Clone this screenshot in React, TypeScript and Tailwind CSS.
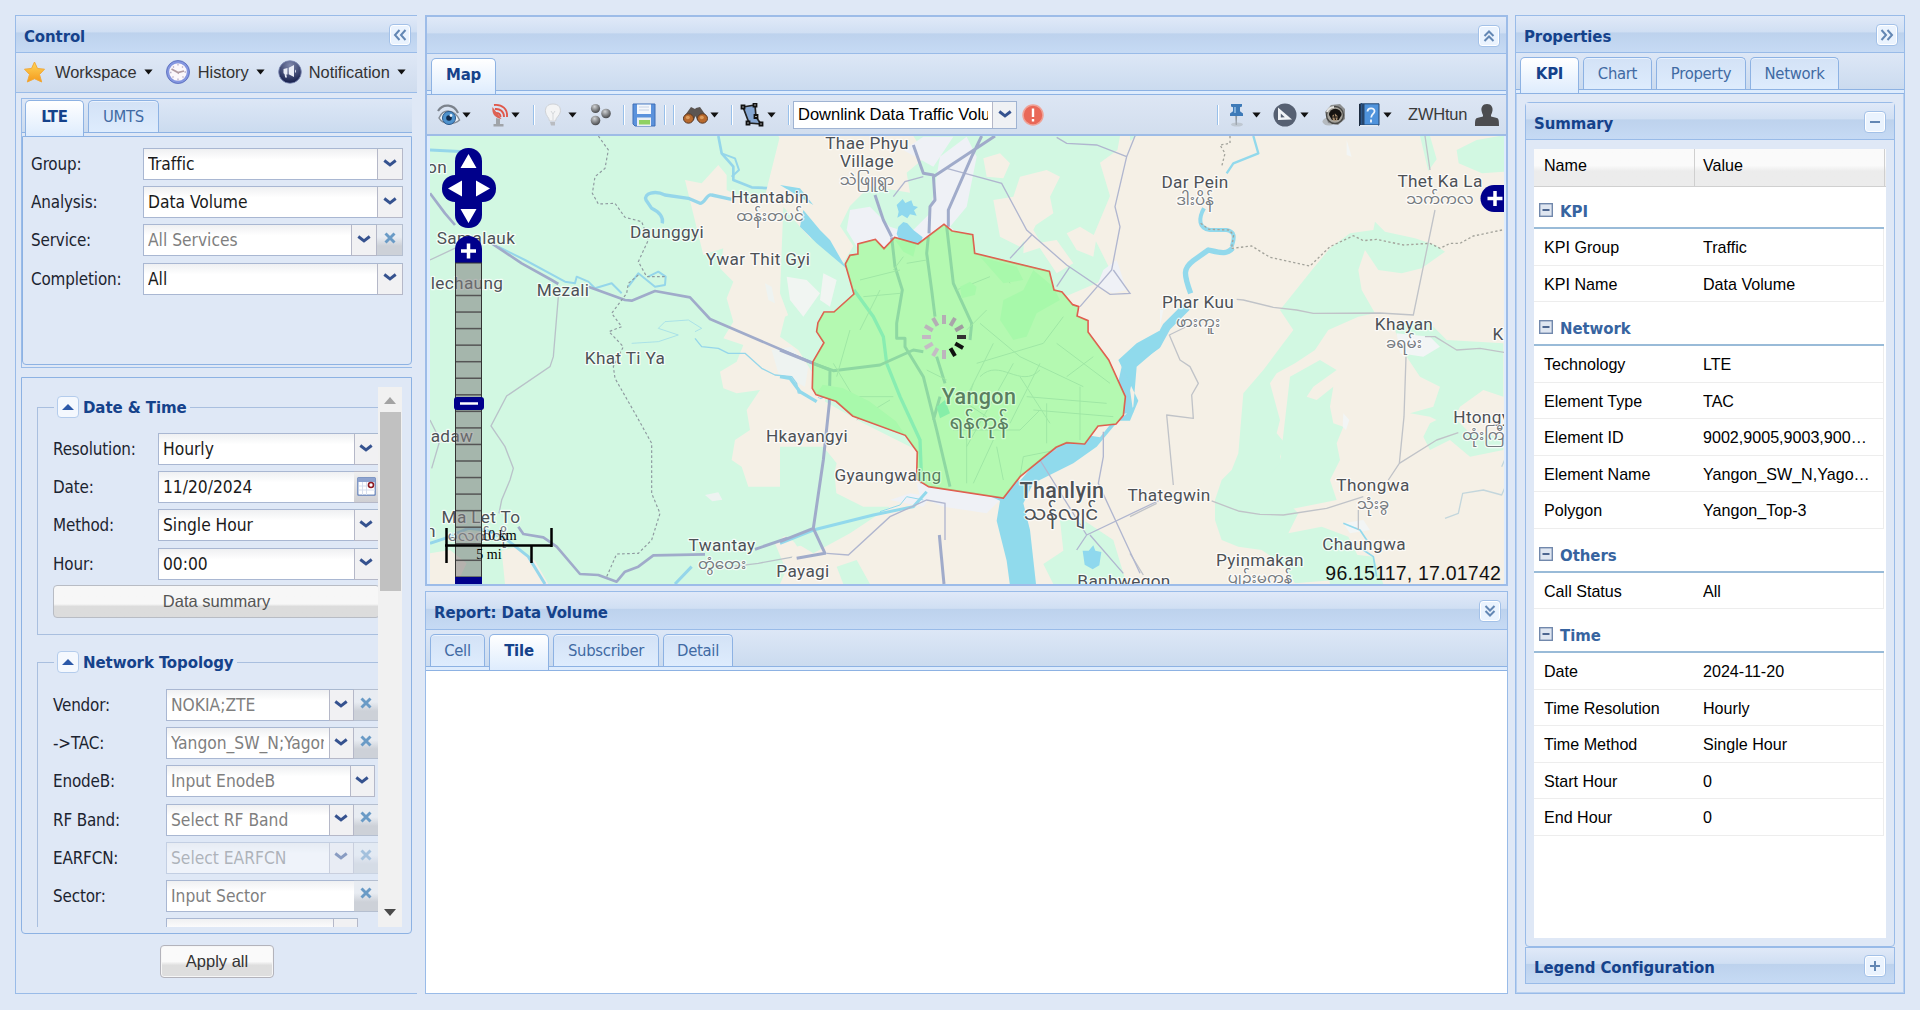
import React from "react";

const TAHOMA = "font-['DejaVu_Sans_Condensed','DejaVu_Sans',sans-serif]";
const ARIAL = "font-['Liberation_Sans',Arial,sans-serif]";

/* ---------- small shared parts ---------- */

const Caret = ({ className = "" }: { className?: string }) => (
  <svg viewBox="0 0 9 6" className={"h-[6px] w-[9px] shrink-0 " + className}>
    <path d="M.4.500h8.200L4.500 5.500z" fill="#111" />
  </svg>
);

const Chevron = () => (
  <svg viewBox="0 0 14 9" className="h-[9px] w-[14px]">
    <path d="M1.300 1.500L7 6l5.700-4.500" fill="none" stroke="#35528f" strokeWidth="2.900" />
  </svg>
);

const ToolButton = ({ children }: { children: React.ReactNode }) => (
  <span className="mt-px flex h-[22px] w-[22px] shrink-0 items-center justify-center rounded-[4px] border border-[#a3c1e8] bg-[#eaf3fe] shadow-[inset_0_0_0_1px_#fff]">
    <svg viewBox="0 0 16 16" className="h-4 w-4" fill="none" stroke="#6387b4" strokeWidth="2">
      {children}
    </svg>
  </span>
);

const Trigger = ({ w = "w-[25px]" }: { w?: string }) => (
  <span className={"flex h-[32px] shrink-0 items-center justify-center border border-[#b5b8c8] border-t-[#a9b9d0] bg-[#f1f1f3] pr-px pb-[2px] " + w}>
    <Chevron />
  </span>
);

const Clear = ({ w = "w-[25px]" }: { w?: string }) => (
  <span className={"flex h-[32px] shrink-0 items-center justify-center border-y border-r border-[#b5bfd0] bg-gradient-to-b from-[#e8ecf2] from-40% to-[#cdd1d8] to-70% pb-[5px] " + w}>
    <svg viewBox="0 0 12 12" className="h-[12px] w-[12px]">
      <path d="M1.500 1.500l9 9M10.500 1.500l-9 9" stroke="#6a9bc6" strokeWidth="2.900" />
    </svg>
  </span>
);

const CalendarTrigger = () => (
  <span className="flex h-[32px] w-[24px] shrink-0 items-center justify-center border-y border-[#b5b8c8] bg-gradient-to-b from-[#efefef] to-[#cfcfd3] pb-[2px]">
    <svg viewBox="0 0 19 19" className="h-[19px] w-[19px]">
      <rect x=".7" y=".7" width="17.600" height="17.600" rx="1.500" fill="#fff" stroke="#7f97c4" strokeWidth="1.600" />
      <rect x="1" y="1" width="17" height="4" fill="#8ea3cf" />
      <path d="M5.500 5v13M9.500 5v13M2 9h16M2 13h16" stroke="#d7dfee" />
      <circle cx="14" cy="8" r="2.500" fill="#fff" stroke="#8e1a22" strokeWidth="1.600" />
    </svg>
  </span>
);

type FieldProps = {
  label: string;
  value: string;
  labelW: string;
  inputW: string;
  muted?: boolean;
  faded?: boolean;
  children?: React.ReactNode;
};

const Field = ({ label, value, labelW, inputW, muted, faded, children }: FieldProps) => (
  <div className="flex h-[38.200px] shrink-0">
    <span className={"shrink-0 pt-[4px] text-[16.900px] tracking-[-0.150px] whitespace-nowrap text-[#1c2430] " + labelW}>{label}</span>
    <div className={"flex " + (faded ? "opacity-50" : "")}>
      <span
        className={
          "block h-[32px] shrink-0 overflow-hidden border border-r-0 border-[#a9b7d2] bg-gradient-to-b from-[#eff0f2] to-white to-35% pr-[5px] pl-[4px] pt-[3px] text-[17.300px] tracking-[-0.020px] whitespace-nowrap " +
          inputW + (muted ? " text-[#7f7f7f]" : " text-[#1a1a1a]")
        }
      >
        <span className="block overflow-hidden">{value}</span>
      </span>
      {children}
    </div>
  </div>
);

const Header = ({ title, children, h = "h-[38px]" }: { title?: string; children?: React.ReactNode; h?: string }) => (
  <div className={"flex shrink-0 items-center justify-between border-b border-[#99bbe8] bg-[linear-gradient(to_bottom,#e0e9f8,#d0dff3_44%,#bdd2ed_47%,#c6daf4)] pr-[6px] pl-[8px] " + h}>
    <span className="pt-[6px] text-[16.600px] leading-none font-bold tracking-[-0.080px] text-[#15428b]">{title}</span>
    {children}
  </div>
);

const Tab = ({ label, active, w }: { label: string; active?: boolean; w: string }) => (
  <span
    className={
      "flex shrink-0 items-center justify-center rounded-t-[5px] border border-b-0 border-[#8db2e3] whitespace-nowrap " +
      w +
      (active
        ? " relative z-10 h-[36px] bg-gradient-to-b from-white to-[#deecfd] pb-[2px] text-[16.600px] font-bold tracking-[-0.200px] text-[#15428b]"
        : " h-[32px] bg-gradient-to-b from-[#d3e2f6] to-[#deecfd] pt-[2px] text-[16.500px] tracking-[-0.300px] text-[#416aa3] shadow-[inset_0_1px_0_#eaf2fd]")
    }
  >
    {label}
  </span>
);

const TabBar = ({ children, className = "" }: { children: React.ReactNode; className?: string }) => (
  <div className={"shrink-0 " + className}>
    <div className="flex h-[36px] gap-[4px] bg-gradient-to-b from-[#dde7f6] to-[#cbdbef] pt-[4px] pl-[4px]">{children}</div>
    <div className="h-[5px] border-y border-[#8db2e3] bg-[#deecfd]" />
  </div>
);

/* ---------- left panel ---------- */

const StarIcon = () => (
  <svg viewBox="0 0 24 24" className="h-[24px] w-[24px]">
    <defs>
      <linearGradient id="star" x1="0" y1="0" x2="0" y2="1">
        <stop offset="0" stopColor="#ffd65a" />
        <stop offset="1" stopColor="#f59a1c" />
      </linearGradient>
    </defs>
    <path d="M11.500 2l3 6.500 7 .7-5 5.300 2.200 7.500-7.200-3.300L4.300 22l2.200-7.500L1.500 9.200l7-.7z" fill="url(#star)" stroke="#f1a93a" strokeLinejoin="round" />
  </svg>
);

const ClockIcon = () => (
  <svg viewBox="0 0 24 24" className="h-[24px] w-[24px]">
    <circle cx="12" cy="12" r="10.200" fill="#fbf7fb" stroke="#8496e0" strokeWidth="2.800" />
    <circle cx="12" cy="12" r="11.500" fill="none" stroke="#5468b8" strokeWidth=".8" />
    <path d="M5.500 9l6.500 3.500 6-1.500M12 12.500l1 1" stroke="#b09ba2" strokeWidth="1.800" fill="none" />
    <path d="M12 3.500v2M12 18.500v2M4 12.500h1.500M18.500 12h1.500M6.500 17.500l1-1M17.500 17.500l-1-1M7 6.500l1 1M17 6.500l-1 1" stroke="#b9b0c8" strokeWidth="1.300" />
  </svg>
);

const MegaphoneIcon = () => (
  <svg viewBox="0 0 24 24" className="h-[24px] w-[24px]">
    <defs>
      <radialGradient id="mega" cx=".5" cy=".2" r=".75">
        <stop offset="0" stopColor="#8089ad" />
        <stop offset="1" stopColor="#1a2350" />
      </radialGradient>
    </defs>
    <circle cx="12" cy="12" r="11.300" fill="url(#mega)" stroke="#7a86b2" strokeWidth=".8" />
    <path d="M5.500 9l4-1v6.500H8.300l.7 3H7.200L6.500 14l-1-.7zM10.700 7.700L16 5v12l-5.300-2.700zM17 9.500c1.300.8 1.300 2.700 0 3.500z" fill="#e9ecf6" />
  </svg>
);

const FieldsetLegend = ({ children }: { children: React.ReactNode }) => (
  <div className="flex h-[22px] items-center">
    <span className="h-px w-[17px] bg-[#a9bfdf]" />
    <span className="ml-[3px] flex h-[22px] w-[22px] items-center justify-center rounded-[4px] border border-[#b4ccec] bg-[#f4f8fe]">
      <svg viewBox="0 0 12 6" className="h-[6px] w-[12px]"><path d="M6 0l6 6H0z" fill="#2b58a8" /></svg>
    </span>
    <span className="mr-[3px] ml-[4px] pt-px text-[16.700px] font-bold tracking-[-0.100px] whitespace-nowrap text-[#15428b]">{children}</span>
    <span className="h-px flex-1 bg-[#a9bfdf]" />
  </div>
);

const MenuItem = ({ icon, label, className = "", gap = "ml-[9px]" }: { icon: React.ReactNode; label: string; className?: string; gap?: string }) => (
  <span className={"flex items-center text-[16.400px] text-[#333] " + className}>
    {icon}
    <span className={gap}>{label}</span>
    <Caret className="ml-[7px]" />
  </span>
);

const LeftPanel = () => (
  <div className="flex w-[402px] shrink-0 flex-col border border-r-0 border-[#99bbe8]">
    <Header title="Control" h="h-[37px]">
      <ToolButton><path d="M7.500 3L3 8l4.500 5M13.500 3L9 8l4.500 5" /></ToolButton>
    </Header>
    <div className={"flex h-[40px] shrink-0 items-center border-b border-[#99bbe8] bg-gradient-to-b from-[#dfe8f6] to-[#cfdcee] pl-[7px] " + ARIAL}>
      <MenuItem icon={<StarIcon />} label="Workspace" gap="ml-[8px]" />
      <MenuItem icon={<ClockIcon />} label="History" className="ml-[13px]" gap="ml-[8px]" />
      <MenuItem icon={<MegaphoneIcon />} label="Notification" className="ml-[13px]" gap="ml-[7px]" />
    </div>

    <div className="mt-[5px] ml-[5px] flex h-[270px] w-[391px] shrink-0 flex-col border border-r-0 border-[#99bbe8]">
      <div className="h-[37px] shrink-0">
        <div className="flex h-[34px] gap-[4px] border-b border-[#8db2e3] bg-gradient-to-b from-[#dde7f6] to-[#cbdbef] pt-[1px] pl-[3px]">
          <Tab label="LTE" active w="w-[59px]" />
          <Tab label="UMTS" w="w-[71px]" />
        </div>
      </div>
      <div className="flex h-[229px] flex-col rounded-b-[4px] border border-[#8db2e3] pt-[11px] pl-[8px]">
        <Field label="Group:" value="Traffic" labelW="w-[112px]" inputW="w-[234px]"><Trigger w="w-[26px]" /></Field>
        <Field label="Analysis:" value="Data Volume" labelW="w-[112px]" inputW="w-[234px]"><Trigger w="w-[26px]" /></Field>
        <Field label="Service:" value="All Services" labelW="w-[112px]" inputW="w-[208px]" muted><Trigger w="w-[26px]" /><Clear w="w-[26px]" /></Field>
        <Field label="Completion:" value="All" labelW="w-[112px]" inputW="w-[234px]"><Trigger w="w-[26px]" /></Field>
      </div>
    </div>

    <div className="mt-[9px] ml-[5px] flex h-[557px] w-[391px] shrink-0 rounded-b-[4px] border border-[#8db2e3]">
      <div className="mt-[9px] h-[540px] w-[356px] shrink-0 overflow-hidden pl-[15px]">
        <div className="mt-[9px]">
          <FieldsetLegend>Date &amp; Time</FieldsetLegend>
          <div className="-mt-[11px] h-[228px] border-b border-l border-[#a9bfdf] pt-[26px] pl-[15px]">
            <Field label="Resolution:" value="Hourly" labelW="w-[105px]" inputW="w-[196px]"><Trigger /></Field>
            <Field label="Date:" value="11/20/2024" labelW="w-[105px]" inputW="w-[196px]"><CalendarTrigger /></Field>
            <Field label="Method:" value="Single Hour" labelW="w-[105px]" inputW="w-[196px]"><Trigger /></Field>
            <Field label="Hour:" value="00:00" labelW="w-[105px]" inputW="w-[196px]"><Trigger /></Field>
            <div className={"-mt-px flex h-[33px] w-[327px] items-center justify-center rounded-[4px] border border-[#b8bcc4] bg-gradient-to-b from-[#f7f7f7] from-58% to-[#dcdcdc] to-66% text-[16.500px] text-[#555] " + ARIAL}>
              Data summary
            </div>
          </div>
        </div>
        <div className="mt-[16px]">
          <FieldsetLegend>Network Topology</FieldsetLegend>
          <div className="-mt-[11px] border-l border-[#a9bfdf] pt-[27px] pl-[15px]">
            <Field label="Vendor:" value="NOKIA;ZTE" labelW="w-[113px]" inputW="w-[163px]" muted><Trigger /><Clear /></Field>
            <Field label="->TAC:" value="Yangon_SW_N;Yagon" labelW="w-[113px]" inputW="w-[163px]" muted><Trigger /><Clear /></Field>
            <Field label="EnodeB:" value="Input EnodeB" labelW="w-[113px]" inputW="w-[184px]" muted><Trigger /></Field>
            <Field label="RF Band:" value="Select RF Band" labelW="w-[113px]" inputW="w-[163px]" muted><Trigger /><Clear /></Field>
            <Field label="EARFCN:" value="Select EARFCN" labelW="w-[113px]" inputW="w-[163px]" muted faded><Trigger /><Clear /></Field>
            <Field label="Sector:" value="Input Sector" labelW="w-[113px]" inputW="w-[188px]" muted><Clear /></Field>
            <Field label="" value="" labelW="w-[113px]" inputW="w-[167px]"><Trigger /></Field>
          </div>
        </div>
      </div>
      <div className="mt-[9px] flex h-[540px] w-[24px] flex-col items-center bg-[#f1f1f1]">
        <svg viewBox="0 0 12 7" className="mt-[10px] h-[7px] w-[12px] shrink-0"><path d="M6 0l6 7H0z" fill="#a3a3a3" /></svg>
        <div className="mt-[8px] h-[179px] w-[21px] shrink-0 bg-[#c1c1c1]" />
        <svg viewBox="0 0 12 7" className="mt-auto mb-[11px] h-[7px] w-[12px] shrink-0"><path d="M6 7l6-7H0z" fill="#4a4a4a" /></svg>
      </div>
    </div>

    <div className={"mt-[11px] ml-[144px] flex h-[33px] w-[114px] shrink-0 items-center justify-center rounded-[4px] border border-[#b3b3bb] bg-gradient-to-b from-[#fafafa] from-50% to-[#dedede] to-62% text-[16.500px] text-[#333] shadow-[inset_0_0_0_1px_#f6f6f6] " + ARIAL}>
      Apply all
    </div>
  </div>
);

/* ---------- map toolbar ---------- */

const Sep = ({ className = "" }: { className?: string }) => (
  <span className={"h-[20px] w-[2px] shrink-0 border-l border-[#98c0ea] bg-white " + className} />
);

const MapToolbar = () => (
  <div className={"flex h-[41px] shrink-0 items-center border-b-2 border-[#9ebce6] bg-gradient-to-b from-[#dde6f4] to-[#d2deee] pl-[10px] text-[#222] " + ARIAL}>
    <svg viewBox="0 0 24 24" className="h-[24px] w-[24px] shrink-0">
      <path d="M1 8C6 0 17 1 21 10" fill="none" stroke="#7b828c" strokeWidth="2.200" />
      <path d="M2 15C6 6 17 5 22.500 17 17 22 6 22 2 15z" fill="#eef2f6" stroke="#858d97" strokeWidth="1.500" />
      <circle cx="12" cy="15" r="6.500" fill="#4f93cd" stroke="#27578c" />
      <circle cx="12" cy="15" r="2.800" fill="#10294a" />
      <circle cx="14" cy="12.500" r="1.400" fill="#e6f1fb" />
    </svg>
    <Caret className="ml-[1px]" />
    <svg viewBox="0 0 18 24" className="ml-[20px] h-[24px] w-[18px] shrink-0">
      <path d="M3 2C11 1 17 6 16 14M4 6c5-.5 9 2.500 9 8M5 10c2.500 0 4.500 1.500 4.500 4" fill="none" stroke="#e0574a" strokeWidth="1.900" />
      <path d="M1.500 4c-1 6 2 11 9 12z" fill="#dd6255" />
      <path d="M5 15l4 1v5h3.500v2.500H2.500V21H5z" fill="#a0a4a9" />
    </svg>
    <Caret className="ml-[2px]" />
    <Sep className="ml-[13px]" />
    <svg viewBox="0 0 18 24" className="ml-[9px] h-[24px] w-[18px] shrink-0">
      <path d="M9 1C3 1 1 5 1.500 9 2 13 5 14 5.500 18h6c.5-4 4-5 4.800-9C17 5 15 1 9 1z" fill="#f3f4f5" stroke="#cfd2d6" />
      <path d="M6 19h5v3.500H7z" fill="#b9bcc1" />
      <path d="M7 8l2 3 2-3M9 11v6" fill="none" stroke="#d5d8db" />
    </svg>
    <Caret className="ml-[6px]" />
    <svg viewBox="0 0 22 24" className="ml-[13px] h-[24px] w-[22px] shrink-0">
      <defs>
        <radialGradient id="ball" cx=".4" cy=".3" r=".7">
          <stop offset="0" stopColor="#d0d2d4" />
          <stop offset="1" stopColor="#46484b" />
        </radialGradient>
      </defs>
      <circle cx="5.500" cy="5.500" r="4.600" fill="url(#ball)" />
      <circle cx="16" cy="10.500" r="4.800" fill="url(#ball)" />
      <circle cx="5.500" cy="17.500" r="4.800" fill="url(#ball)" />
    </svg>
    <Sep className="ml-[11px]" />
    <svg viewBox="0 0 24 24" className="ml-[7px] h-[24px] w-[24px] shrink-0">
      <path d="M1 1h22v22H3l-2-2z" fill="#5b92dc" stroke="#3e6fb6" />
      <rect x="5" y="1.500" width="14" height="9.500" fill="#f4f7fc" />
      <path d="M7 4h10M7 7h10" stroke="#c5d2e6" />
      <rect x="5" y="14.500" width="14" height="8.500" fill="#e9eef2" />
      <rect x="7" y="17" width="11" height="4.500" fill="#8fd161" />
    </svg>
    <Sep className="ml-[8px]" />
    <Sep className="ml-[7px]" />
    <svg viewBox="0 0 25 18" className="ml-[8px] h-[18px] w-[25px] shrink-0">
      <path d="M8 1l4 2 1-1 4-1 7 10-4 6-6-3-1.500-4-1.500 4-6 3-5-5z" fill="#5b5552" />
      <ellipse cx="5.500" cy="12.500" rx="5" ry="4.700" fill="#b86a2e" stroke="#5a3a26" />
      <ellipse cx="19.500" cy="12.500" rx="5" ry="4.700" fill="#b86a2e" stroke="#5a3a26" />
      <ellipse cx="4.800" cy="11.500" rx="2" ry="1.800" fill="#dd9d5e" />
      <ellipse cx="18.800" cy="11.500" rx="2" ry="1.800" fill="#dd9d5e" />
    </svg>
    <Caret className="ml-[2px]" />
    <Sep className="ml-[12px]" />
    <svg viewBox="0 0 24 24" className="ml-[7px] h-[24px] w-[24px] shrink-0">
      <path d="M3 4l12-2 1 12 5 7-12-1z" fill="#86a7d3" stroke="#222" strokeWidth="1.700" />
      <path d="M1.500 2.500h3v3h-3zM13.500.5h3v3h-3zM14.500 12h3v3h-3zM19.500 19.500h3v3h-3zM6.500 18.500h3v3h-3z" fill="#fff" stroke="#111" strokeWidth="1.800" />
    </svg>
    <Caret className="ml-[3px]" />
    <Sep className="ml-[12px]" />
    <div className="ml-[3px] flex h-[28px] w-[224px] shrink-0 border border-[#9fb3d2] bg-white text-[16.500px] text-black">
      <span className="my-auto ml-[4px] w-[190px] overflow-hidden whitespace-nowrap">Downlink Data Traffic Volume</span>
      <span className="ml-auto flex w-[24px] items-center justify-center border-l border-[#b5b8c8] bg-[#eff1f4]"><Chevron /></span>
    </div>
    <svg viewBox="0 0 22 22" className="ml-[5px] h-[22px] w-[22px] shrink-0">
      <circle cx="11" cy="11" r="10" fill="#e96858" stroke="#f0a297" strokeWidth="1.500" />
      <path d="M11 4.500v8.500M11 15v2.600" stroke="#fff" strokeWidth="2.400" />
    </svg>
    <Sep className="ml-[173px]" />
    <svg viewBox="0 0 16 24" className="ml-[9px] h-[24px] w-[16px] shrink-0">
      <ellipse cx="9" cy="21.500" rx="6" ry="2" fill="#bfc8d2" />
      <path d="M7.300 13h1.800l-.5 9h-.8z" fill="#8d959d" />
      <path d="M3 1h11v2.500l-2 .8v4l3 2.200V13H2v-2.500l3-2.200v-4l-2-.8z" fill="#3d7ab8" />
      <path d="M6 4h2v6H6z" fill="#7fb0dd" />
    </svg>
    <Caret className="ml-[8px]" />
    <svg viewBox="0 0 24 24" className="ml-[12px] h-[24px] w-[24px] shrink-0">
      <ellipse cx="12" cy="12" rx="11.500" ry="11.500" fill="#566072" />
      <path d="M5 4.500L19 16.500 5 17z" fill="#f0f3f6" />
      <path d="M7.800 10.500l4 3.700-4 .2z" fill="#566072" />
    </svg>
    <Caret className="ml-[3px]" />
    <svg viewBox="0 0 24 24" className="ml-[13px] h-[24px] w-[24px] shrink-0">
      <ellipse cx="7" cy="18.500" rx="6.500" ry="4" fill="#b5babf" />
      <path d="M3 9l6-7 9-1 5 5v10l-7 6-10-2z" fill="#8d8f90" />
      <circle cx="13" cy="12" r="8.500" fill="#a5a29a" stroke="#4a4a48" strokeWidth="1.400" />
      <path d="M7 12a6.300 6.300 0 0 1 12.600 0l-3 5h-6.600z" fill="#161412" />
      <path d="M10 13l3-2.500 3 3-1 4h-4z" fill="#a68a6a" />
      <path d="M12 10l1.500 7M9 14h8" stroke="#161412" />
      <path d="M5 9a8 8 0 0 1 7-5" stroke="#e5e5e2" strokeWidth="2" fill="none" />
    </svg>
    <svg viewBox="0 0 22 24" className="ml-[12px] h-[24px] w-[22px] shrink-0">
      <path d="M1 1l3-1v23H1z" fill="#1c2b40" />
      <path d="M3 .8h18V22H3z" fill="#4f93dc" stroke="#224672" />
      <path d="M2 22h18v1.500H2z" fill="#e5eaf0" />
      <path d="M3.500 1h3v21h-3z" fill="#27466d" />
      <path d="M9.500 8.500c.2-4.500 7.500-4 7 0-.3 2.500-3.300 2.500-3.300 6M13 16.500v3" fill="none" stroke="#eef5fd" strokeWidth="1.800" />
    </svg>
    <Caret className="ml-[3px]" />
    <span className="ml-[16px] text-[16.500px] tracking-[-0.200px] text-[#3a3a3a]">ZWHtun</span>
    <svg viewBox="0 0 24 22" className="ml-[8px] h-[22px] w-[24px] shrink-0">
      <path d="M12 0c4.500 0 6 3.500 5.500 6.500-.4 2.500-1 3.500-1.500 4.500v1.500l6 1.500c1.500.7 2 2 2 8H0c0-6 .5-7.300 2-8l6-1.500V11c-.5-1-1.100-2-1.500-4.500C6 3.500 7.500 0 12 0z" fill="#4c4d50" />
    </svg>
  </div>
);

/* ---------- map ---------- */

type Label = [x: number, y: number, text: string, kind?: "my" | "big" | "bigmy"];

const LABELS: Label[] = [
  [437, 173, "on"],
  [476, 244, "Samalauk"],
  [467, 289, "lechaung"],
  [563, 296, "Mezali"],
  [667, 238, "Daunggyi"],
  [770, 203, "Htantabin"],
  [770, 221, "ထန်းတပင်", "my"],
  [758, 265, "Ywar Thit Gyi"],
  [625, 364, "Khat Ti Ya"],
  [452, 442, "adaw"],
  [481, 523, "Ma Let To"],
  [478, 541, "မလက်တို", "my"],
  [431, 537, "n"],
  [722, 551, "Twantay"],
  [722, 569, "တွံတေး", "my"],
  [803, 577, "Payagi"],
  [807, 442, "Hkayangyi"],
  [888, 481, "Gyaungwaing"],
  [867, 149, "Thae Phyu"],
  [867, 167, "Village"],
  [867, 185, "သဲဖြူရွာ", "my"],
  [979, 404, "Yangon", "big"],
  [979, 429, "ရန်ကုန်", "bigmy"],
  [1062, 498, "Thanlyin", "big"],
  [1061, 520, "သန်လျင်", "bigmy"],
  [1169, 501, "Thategwin"],
  [1124, 587, "Banbwegon"],
  [1195, 188, "Dar Pein"],
  [1195, 205, "ဒါးပိန်", "my"],
  [1198, 308, "Phar Kuu"],
  [1198, 327, "ဖားကူး", "my"],
  [1440, 187, "Thet Ka La"],
  [1440, 204, "သက်ကလ", "my"],
  [1404, 330, "Khayan"],
  [1404, 348, "ခရမ်း", "my"],
  [1503, 340, "Ka"],
  [1484, 423, "Htongyi"],
  [1486, 440, "ထုံးကြီး", "my"],
  [1373, 491, "Thongwa"],
  [1373, 509, "သုံးခွ", "my"],
  [1364, 550, "Chaungwa"],
  [1260, 566, "Pyinmakan"],
  [1260, 583, "ပျဉ်းမကန်", "my"],
];

const MapLabels = () => (
  <g textAnchor="middle" stroke="#fff" strokeOpacity=".75" strokeLinejoin="round" paintOrder="stroke">
    {LABELS.map(([x, y, text, kind]) => {
      const my = kind === "my" || kind === "bigmy";
      const big = kind === "big" || kind === "bigmy";
      return (
        <text
          key={text}
          x={x}
          y={y}
          fill={kind === "my" ? "#74797e" : "#4d5156"}
          fontSize={my ? (big ? 20 : 15) : big ? 21.5 : 17.2}
          fontWeight={big && !my ? 500 : 400}
          fontFamily={my ? "'Noto Sans Myanmar','Padauk',sans-serif" : "Roboto, sans-serif"}
          letterSpacing={my ? 0 : 0.35}
          strokeWidth={2.5}
        >
          {text}
        </text>
      );
    })}
  </g>
);

const POLY =
  "M99 695L132 638 110 605 114 578 132 546 162 546 222 492 196 402 210 376 234 372 234 342 286 328 312 356 344 322 414 342 492 283 516 303 578 314 584 370 808 424 822 480 846 486 878 524 896 530 891 558 924 572 924 606 986 690 1036 800 1030 856 1008 882 954 888 914 942 860 938 828 952 720 1040 670 1104 446 1070 410 1048 412 966 376 916 218 858 168 814 108 794 97 775z";

const MapView = () => (
  <svg viewBox="430 136 1074 448" className="block h-[448px] w-[1074px]">
    <rect x="430" y="136" width="1075" height="448" fill="#d2f8e2" />

    {/* western district */}
    <g transform="translate(425 130) scale(.33333)">
      <g fill="#f5f0e6">
        <path d="M1060 18L1080 50 1110 70 1130 130 1170 190 1200 230V18z" />
        <path d="M780 150l50 10 50-55 25 30v45l60 30 60-20 60 40 60 60 30 80-20 60 15 60-30 40-60 30-15 60 55 40 50 80 30 50v280H970l-20-60-30-20 10-60 45-30-10-60 40-60-70 10-40-15-10-50 50-30 20-50-60-20 30-50-20-70 20-50-40-40 10-60-60 20z" />
        <path d="M15 1270l60-10 50 40-30 62H15zM230 1262l40-10 60 40 40 70H240z" />
        <path d="M1100 1170l50-20 50 30v60l-60-20zM1050 1240l40-30 40 60 70 20v72h-100z" />
      </g>
      <path d="M1040 660l60-10 50 60-10 60-80-40zM840 1095l40-8 12 22-30 5zM1110 420l40 20-20 80-30-30zM1020 460l20 10 10 50-20-10z" fill="#eef3f1" />
      <g fill="none" stroke="#95d6ea" strokeLinejoin="round">
        <path d="M880 18L890 70 925 110 925 150 980 172 1040 175 1080 180 1110 240" strokeWidth="8" />
        <path d="M1040 170L1080 178 1100 190" strokeWidth="22" />
        <path d="M890 70L930 85 942 120 920 140" strokeWidth="6" />
        <path d="M920 208L860 195C845 190 840 220 825 220L790 205 720 195C690 180 655 190 663 210L680 235C710 250 715 265 712 280" strokeWidth="10" />
        <path d="M15 60L120 65" strokeWidth="9" />
        <path d="M220 350L300 390 420 455 450 460 455 440 490 455 510 475 560 460 590 490" strokeWidth="6" />
        <path d="M610 470L640 430 690 470 720 465 722 440 700 425 670 440" strokeWidth="6" />
        <path d="M810 625L830 650 880 655 910 670 960 670 1010 715 1050 735 1100 740 1115 760 1120 790 1170 812 1200 800" strokeWidth="4" />
        <path d="M1120 795L1175 812 1185 805" strokeWidth="12" />
        <path d="M15 1240L60 1225 130 1195 180 1200 240 1225" strokeWidth="9" />
        <path d="M240 1225L310 1280 360 1362M750 1362L800 1310" strokeWidth="9" />
        <path d="M620 640l80-5 60-20-60-20 20-20 70-5 40 25-20 10" strokeWidth="2" />
      </g>
      <g fill="none" stroke="#a0abca" strokeWidth="8" strokeLinejoin="round">
        <path d="M15 190L60 250 90 285M200 340L290 400 380 450 400 462M490 470L600 510 620 512 690 483 795 502 855 567 1160 698" />
        <path d="M1195 950L1190 1080 1165 1195 1200 1270M990 1258L1165 1198" strokeWidth="9" />
        <path d="M280 1190L295 1212 355 1222 395 1250 465 1332 520 1335 575 1355 600 1325 640 1310 685 1276 840 1273M1110 1285L1200 1270" />
      </g>
      <g fill="none" stroke="#b9c2c9" strokeWidth="4">
        <path d="M400 500L385 680 375 710 245 798 198 888 240 950 265 1015 255 1050 230 1110 222 1150M15 390L100 350M15 870L45 930 20 1015M920 1310L1000 1300 1110 1280" />
      </g>
      <g fill="none" stroke="#8f9aa0" strokeWidth="3.500" strokeDasharray="8 7">
        <path d="M520 18L550 60 540 115 510 140 502 190 520 222 570 220 600 262 650 275 670 330 640 395 665 440 720 440M640 435L610 460 605 490 560 550 590 590 552 605 595 650 565 710 570 745 630 850 680 940 680 1090 705 1150 680 1230 640 1270 575 1272 545 1340" />
      </g>
    </g>

    {/* eastern district */}
    <g transform="translate(1130 130) scale(.33333)">
      <path d="M-30 18H1126V1362H-1050L-1000 1250-900 1220-700 1080-300 900-200 600-110 480 0 430 -40 300 -60 180z" fill="#f5f0e6" />
      <g fill="#d2f8e2">
        <path d="M0 18H40L50 60 40 120 20 190 0 220zM0 230l10 20-10 15zM0 500l15 10-5 25-10 3z" />
        <path d="M980 60l60-30 86-15v110l-70 5-70-30zM870 18h30l20 70-25 35z" />
        <path d="M550 415l50-60 60-45 70-10 5-25 30 30 90 20 60 20 30 20-70 50-60 15-70-10-40-60-20 60 10 60 40 70-50 10-90 40-40 60-60 40-55 30-20 30 30 110-10 40 25 30-15 40 15 60-20 50 60 60-30 60 100-20 80 30 30 60-70 70-120 10-40-60-60-40-70-10-50-20-20-60 0-60 20-60 30-30 20-50 15-180 60-70 60-80 30-40-40-60z" />
        <path d="M480 740l90-50 50 30-70 50-20 30 30 10 50-40-10 60 10 50 30 10-20 50 10 50-30 60 20 60-200 40-20-60 20-60 30-30 15-130z" />
        <path d="M790 590l100-20 60 60 170 10v160l-60-20-70 50-30 60-60-30-60-10 70-20 20-60-60-30-40-60z" />
        <path d="M900 880l60-30 60 60 100 10v40l-100 20-60-50-60 30-20-40zM590 1290l50-20 90 10 30 82H600z" />
      </g>
      <path d="M40 530l60 10-10 50-60-10zM800 610l100 10 30 30-50 30-70-10zM640 1180l60-10 20 30-60 10zM640 850l18 20-10 30-10-10zM650 30l15 50-15-5z" fill="#f2f5f5" />
      <g fill="none" stroke="#92d9ec" strokeLinejoin="round">
        <path d="M370 18L385 70 310 100 290 130" strokeWidth="7" />
        <path d="M222 235C205 265 205 295 240 300L290 300C315 305 315 320 305 350" strokeWidth="12" />
        <path d="M308 354C290 375 270 368 235 360L190 392C160 415 160 430 182 490" strokeWidth="16" />
        <path d="M170 530L110 590 80 645 0 700" strokeWidth="26" />
        <path d="M0 690L-20 780-10 850" strokeWidth="40" />
        <path d="M640 1180l50 20 20 30-10 30 30 20 10 60" strokeWidth="5" />
      </g>
      <g fill="none" stroke="#c0c3c8" strokeWidth="4" strokeLinejoin="round">
        <path d="M320 508L340 510 430 532 500 540 550 550 750 549 850 555 915 240M885 18L900 120M885 620L915 620 980 660 1050 655 1126 668M828 680L822 860 808 1000 775 1050M808 1000L920 930 985 908M700 1100L590 1135 460 1155 390 1153 325 1143 245 1113M80 1120L0 1160M130 1065L110 855 190 865 185 795 205 760 180 710 150 690 118 615 210 570M0 1270L40 1335M685 1140V1200" />
        <path d="M945 1165L985 1150 998 1090 1060 1080 1115 1095 1126 1070M1126 985L1115 1010" stroke="#c3d6dc" />
      </g>
      <g fill="none" stroke="#a3a39b" strokeWidth="4" strokeDasharray="7 7">
        <path d="M300 18V40L270 45 285 70 275 110M305 355L365 348 420 382 540 408 600 350 670 317 700 332 740 328 820 345 900 340 930 355 960 340 990 340 1030 318 1126 298M212 280l25 18 60 2 14 15-6 38" />
      </g>
    </g>

    {/* city */}
    <g transform="translate(780 130) scale(.33333)">
      <path d="M-60 780L100 795 250 880 410 960 412 1060 600 1100 560 1362 190 1362 200 1310 140 1270 100 1190 170 1100 160 990 100 950-40 960z" fill="#f5f0e6" />
      <path d="M0 950h130l40 50-20 80 100 50 80 0-120 80-110 60-100-60zM170 1310l60-20 40 72H190z" fill="#d2f8e2" />
      <path d="M0 18h400l40 60-60 50 10 60-120-20-60 60-30 60 40 60-30 50-40-40-60-60-60-30-90-10z" fill="#f5f0e6" />
      <path d="M10 230l50 60 80 90 60 100-60 60-110 30-30-80z" fill="#d2f8e2" />
      <path d="M20 440l60 10 40 40-50 70-40-50zM130 430l40 20-20 80-30-20z" fill="#f1f5f2" />
      <g fill="#f5f0e6">
        <path d="M610 85l50-15 30 30-20 45-50-5zM640 210l60-10 20-60 80-20 40 20-30 60 10 50-60 40-40 60-60-30zM740 160l60 60-40 80 30 50-60 20z" />
        <path d="M860 310l40-20 50 30-10 60-50-20zM770 340l60-10 50 70-50 30zM1070 18h70v600l-240-60-40-60 140-60-60-120 50-120-30-100z" />
      </g>
      <path d="M210 240l60-10 60 60 60 20 60-60 30-170 80-60 30 60-30 150-50 60 60 50-200 20-140-10-30-50zM370 60l60-40 90 0-60 90zM970 420l40-30 30 90-40 10-50-20zM410 1060l150 10 100 40-40 40-130-20-70-30zM330 1110l60-20 60 10-20 30z" fill="#eff1f6" />
      <path d="M350 225l18-18 8 12 18-8 6 16 14 4-12 10 8 16-20-4-8 12-16-10-14 8 4-18zM355 290l15-14 12 4 18 20 28 22-8 22-60-12-10-20z" fill="#8fd8ee" />
      <path d="M840 1170l70 0 90 60 40 132H820l-30-60 60-40z" fill="#d2f8e2" />
      <path d="M908 1262l18 0 14-16 6 16 18 4-6 40-20 12-24-14z" fill="#8fd8ee" />
      <path d="M1015 690l55-50 90-50-20 60-70 60-10 120-60 60-50 60-70 50-120 60-30 60 20 80 20 180v62h-70l-20-150-30-120 10-60-90-40-150-40 150 0 150 20 70-80 110-60 60 10 40-50 50 0 25-60z" fill="#90daec" />
      <path d={POLY} fill="#f3f2ec" />
      <path d="M70 240L120 300 150 330 190 400 205 420 110 340 60 290zM0 165l60 10 40 50" fill="#90daec" />
      <g fill="none" stroke="#92d9ec" strokeWidth="10">
        <path d="M222 480L280 560 310 620 320 700 360 800 420 930 425 1060M0 740l30 5 30 40 50 30" />
        <path d="M440 1085L400 1130 280 1155 100 1200 0 1240" strokeWidth="9" />
        <path d="M430 1110l-50-10-20 25-60 20" strokeWidth="3" />
      </g>
      <g fill="none" stroke="#b0b6cf" strokeWidth="4">
        <path d="M500 115L665 160 740 300 860 405 990 493 1050 490 1000 420M830 22L860 40 950 45 1040 80 1065 18M1040 80L1005 230 1020 290 995 420 900 530M755 315L690 385M870 410L830 470M1140 1110L920 1215 780 990M970 905L970 980 955 1060 1080 1330M930 1215L1030 1330M920 1215L890 1260M495 1230V1120L440 1110 330 1160 205 1275 140 1270M430 140L375 155 340 200" />
      </g>
      <g fill="none" stroke="#a0abca" strokeWidth="9" strokeLinejoin="round">
        <path d="M400 45L430 130 460 135 465 210 450 230 447 310M645 18L460 140M605 18L575 80 505 240 505 290M285 195L310 270 335 320" />
        <path d="M0 660L150 720 148 820 130 990 100 1195 135 1270 50 1285M100 1195L0 1235" />
        <path d="M478 1215L492 1362" />
        <path d="M98 700L160 722 300 705 400 660 430 665M335 322L345 410 367 480 350 580V625H375L375 650 430 740 470 900 510 1070M445 320L440 370 455 480 465 560M500 290L520 460 575 580 570 630M470 680L495 760M460 870L480 800" />
      </g>
      <g fill="none" stroke="#c3ccd0" strokeWidth="3">
        <path d="M600 580L720 680 910 770M590 700l200-60 60-80M700 700L560 950M640 640l-80 160M720 740l90 140M780 700l-90 180M830 640l160 120M520 900h200l60-60M650 950l20 100M560 920v140M640 930l-60 130M740 800l240 20M760 840l240 20M860 740l80-60M800 820v120M900 770v160M240 450l120-30M250 500l110-10M240 600l60-120M170 740l40-140M230 870l100-60M560 600l60-60M440 720l60 30M530 480l100-40M600 740c60-60 120 40 180-20M830 960l-100 20-10 60M380 400l60-10M370 380l-30 40M660 400l30 60M580 760l-20 60 60 40M160 700l60 100 120 0" />
      </g>
      <path d="M540 470l30-15 20 15-5 25-40 10zM670 510l60-30 30-60 60 50 20 40-70 40-30 70-40 10-40-60zM345 330l65 10-10 40-30-15z" fill="#d6f3dc" />
      <path d="M108 794l20-30 60 10 80 40 80 60 40 60-14-18-156-58-50-44zM600 380l110 30 20 40-60 10z" fill="#d8f3dd" />
      <path d="M470 830l25-20 15 40-30 15z" fill="#8fdcd8" />
      <path d={POLY} fill="#80ff80" fillOpacity=".38" stroke="#e8504a" strokeWidth="5" />
    </g>

    <MapLabels />
    <path d={POLY} transform="translate(780 130) scale(.33333)" fill="#80ff80" fillOpacity=".26" />

    {/* busy spinner */}
    <g transform="translate(944 337)" strokeWidth="4">
      {["#333", "#111", "#111", "#bdb4bd", "#c5bcc5", "#c5bcc5", "#c3b8c3", "#bbb4bb", "#b5adb5", "#b5adb5", "#a9a4a9", "#a09ca0"].map((c, i) => (
        <path key={i} d="M13 0h9" stroke={c} transform={`rotate(${i * 30})`} />
      ))}
    </g>

    {/* pan and zoom controls */}
    <g fill="#00008b">
      <rect x="455" y="148" width="27" height="80" rx="13" />
      <rect x="442" y="175" width="54" height="27" rx="13" />
      <path d="M455 263v-14a13.500 13 0 0 1 27 0v14z" />
    </g>
    <path d="M468.500 154l8 14h-16zM468.500 223l8-14h-16zM448 188.500l14-8v16zM490 188.500l-14-8v16z" fill="#fff" />
    <path d="M468.500 243.500v15M461 251h15" stroke="#fff" strokeWidth="3.500" />
    <rect x="455.500" y="263" width="26" height="314" fill="#7f7f7f" fillOpacity=".55" stroke="#333" />
    {Array.from({ length: 17 }, (_, i) => (
      <path key={i} d={`M456 ${295.5 + i * 16.55}h25`} stroke="#555" strokeWidth="1.500" />
    ))}
    <rect x="454" y="397" width="30" height="13" rx="3" fill="#00008b" />
    <path d="M460 403.500h18" stroke="#fff" strokeWidth="2.500" />
    <rect x="455" y="577" width="27" height="8" fill="#00008b" />

    <path d="M1505 185h-11a13.500 13.500 0 0 0 0 27h11z" fill="#00008b" />
    <path d="M1495 191v15M1487.500 198.500h15" stroke="#fff" strokeWidth="3.500" />

    {/* scale line */}
    <path d="M446.500 528v35M445 545.500h107M551.500 528v19M531.500 546v17" stroke="#000" strokeWidth="2.500" fill="none" />
    <g fontFamily="'Liberation Serif', serif" fontSize="14" textAnchor="middle" fill="#000">
      <text x="499" y="540">10 km</text>
      <text x="489" y="559">5 mi</text>
    </g>
    <text x="1501" y="580" textAnchor="end" fontFamily="'Liberation Sans', sans-serif" fontSize="19.500" letterSpacing=".2" fill="#111">
      96.15117, 17.01742
    </text>
  </svg>
);

const MiddlePanel = () => (
  <div className="flex w-[1083px] shrink-0 flex-col">
    <div className="flex h-[571px] flex-col border-2 border-[#9dbce8]">
      <Header h="h-[37px]">
        <ToolButton><path d="M3.500 8L8 3.500 12.500 8M3.500 13L8 8.500l4.500 4.500" /></ToolButton>
      </Header>
      <TabBar>
        <Tab label="Map" active w="w-[65px]" />
      </TabBar>
      <MapToolbar />
      <div className="flex bg-[#deecfd] pl-[3px]">
        <MapView />
      </div>
    </div>
    <div className="mt-[5px] flex flex-1 flex-col border border-[#99bbe8] bg-white">
      <Header title="Report: Data Volume" h="h-[38px]">
        <ToolButton><path d="M3.500 3L8 7.500 12.500 3M3.500 8L8 12.500 12.500 8" /></ToolButton>
      </Header>
      <TabBar>
        <Tab label="Cell" w="w-[55px]" />
        <Tab label="Tile" active w="w-[60px]" />
        <Tab label="Subscriber" w="w-[106px]" />
        <Tab label="Detail" w="w-[70px]" />
      </TabBar>
    </div>
  </div>
);

/* ---------- right panel ---------- */

const Collapse = () => (
  <svg viewBox="0 0 14 14" className="h-[14px] w-[14px]">
    <rect x=".7" y=".7" width="12.600" height="12.600" fill="#dfe6f1" stroke="#7188ac" strokeWidth="1.400" />
    <path d="M3.500 7h7" stroke="#33507f" strokeWidth="1.700" />
  </svg>
);

const GROUPS: { name: string; head: string; rows: [string, string][] }[] = [
  { name: "KPI", head: "h-[42px]", rows: [["KPI Group", "Traffic"], ["KPI Name", "Data Volume"]] },
  {
    name: "Network",
    head: "h-[44px]",
    rows: [
      ["Technology", "LTE"],
      ["Element Type", "TAC"],
      ["Element ID", "9002,9005,9003,9005,9001"],
      ["Element Name", "Yangon_SW_N,Yagon_E"],
      ["Polygon", "Yangon_Top-3"],
    ],
  },
  { name: "Others", head: "h-[44px]", rows: [["Call Status", "All"]] },
  {
    name: "Time",
    head: "h-[44px]",
    rows: [["Date", "2024-11-20"], ["Time Resolution", "Hourly"], ["Time Method", "Single Hour"], ["Start Hour", "0"], ["End Hour", "0"]],
  },
];

const RightPanel = () => (
  <div className="flex w-[390px] shrink-0 flex-col border border-[#99bbe8]">
    <Header title="Properties" h="h-[37px]">
      <ToolButton><path d="M2.500 3L7 8l-4.500 5M8.500 3L13 8l-4.500 5" /></ToolButton>
    </Header>
    <TabBar>
      <Tab label="KPI" active w="w-[59px]" />
      <Tab label="Chart" w="w-[69px]" />
      <Tab label="Property" w="w-[90px]" />
      <Tab label="Network" w="w-[89px]" />
    </TabBar>
    <div className="flex flex-1 flex-col border border-t-0 border-[#b8d0f0] px-[8px] pt-[8px] pb-[8px]">
      <div className="flex h-[845px] flex-col rounded-[4px] border border-[#99bbe8]">
        <Header title="Summary" h="h-[37px]">
          <span className="mr-[2px] flex"><ToolButton><path d="M3 8h10" /></ToolButton></span>
        </Header>
        <div className={"mx-[8px] mt-[9px] h-[789px] bg-white text-[16.100px] text-black " + ARIAL}>
          <div className="flex h-[38px] border-b border-[#d0d0d0] bg-gradient-to-b from-[#fafafa] from-45% to-[#ececec] to-60%">
            <span className="w-[161px] border-r border-[#cfcfcf] pt-[4px] pl-[10px]">Name</span>
            <span className="w-[190px] border-r border-[#cfcfcf] pt-[4px] pl-[8px]">Value</span>
          </div>
          {GROUPS.map((g) => (
            <div key={g.name} className="w-[350px]">
              <div className={"flex items-end gap-[7px] border-b-2 border-[#99bbd8] pb-[2px] pl-[5px] " + g.head + " " + TAHOMA}>
                <span className="pb-[8px]"><Collapse /></span>
                <span className="text-[16.600px] font-bold tracking-[-0.050px] text-[#3764a0]">{g.name}</span>
              </div>
              {g.rows.map(([k, v]) => (
                <div key={k} className="flex h-[36.500px] border-r border-b border-[#ededed] pt-[6px]">
                  <span className="w-[169px] shrink-0 pl-[10px]">{k}</span>
                  <span className="w-[170px] overflow-hidden text-ellipsis whitespace-nowrap">{v}</span>
                </div>
              ))}
            </div>
          ))}
        </div>
      </div>
      <div className="flex h-[37px] flex-col border border-[#99bbe8] border-b-0">
        <Header title="Legend Configuration" h="h-[36px]">
          <span className="mr-[2px] flex"><ToolButton><path d="M3 8h10M8 3v10" /></ToolButton></span>
        </Header>
      </div>
    </div>
  </div>
);

export default function App() {
  return (
    <div className={"flex h-[1010px] w-[1920px] overflow-hidden bg-[#dfe8f6] pt-[15px] pb-[16px] pl-[15px] " + TAHOMA}>
      <LeftPanel />
      <div className="w-[8px] shrink-0" />
      <MiddlePanel />
      <div className="w-[7px] shrink-0" />
      <RightPanel />
    </div>
  );
}
